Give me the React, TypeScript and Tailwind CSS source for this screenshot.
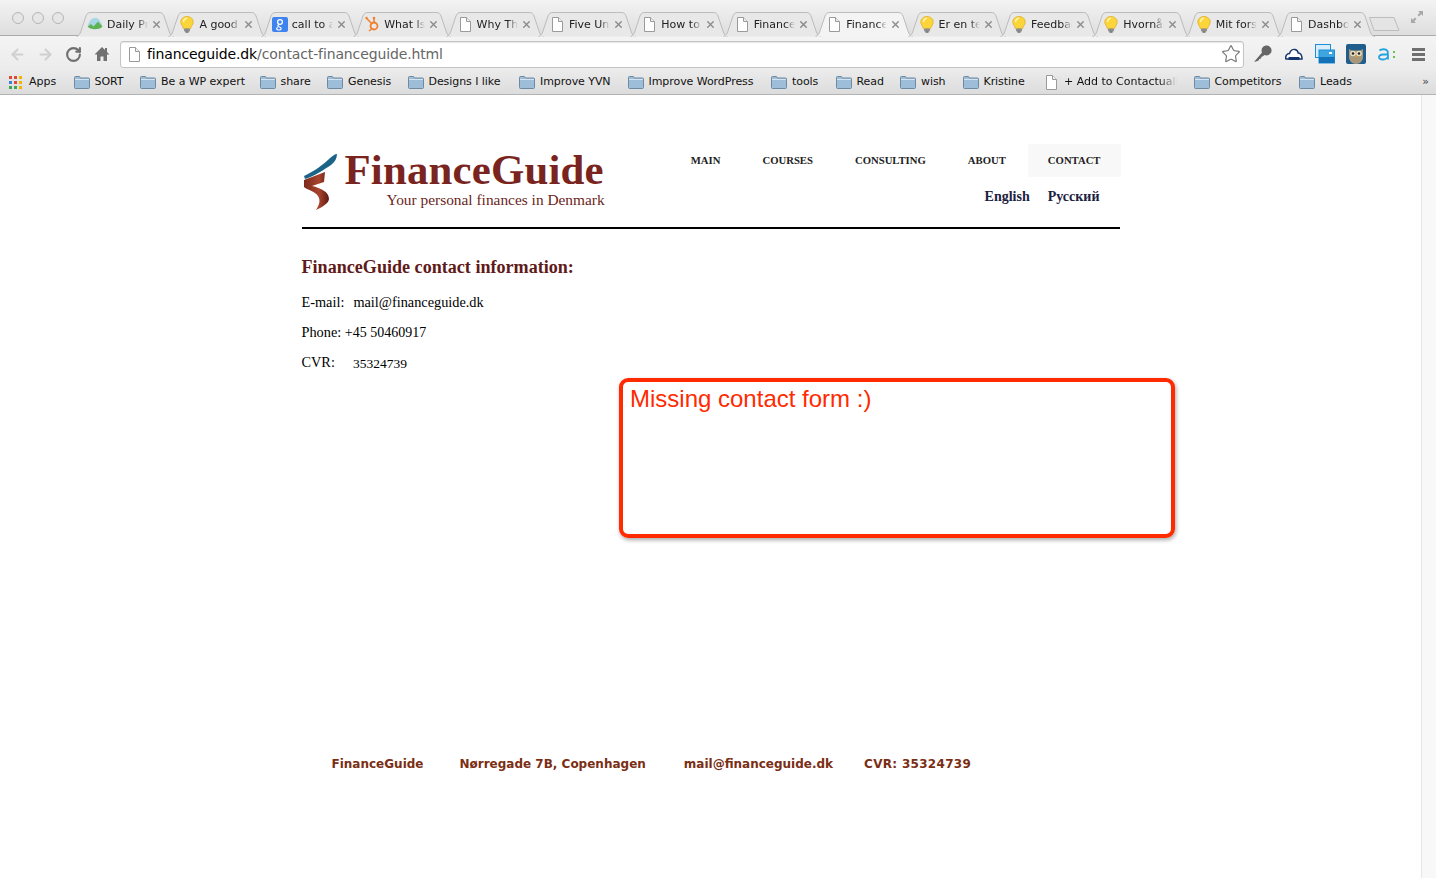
import { ArrowLeft, ArrowRight, RotateCw, Star, X } from "lucide-react";

const uiFont = "font-['DejaVu_Sans',sans-serif]";
const serif = "font-['Liberation_Serif',serif]";

const Doc = () => (
  <svg width="12" height="15" viewBox="0 0 12 15" className="shrink-0">
    <path d="M1.5.5h6l4 4v10h-10z" fill="#fff" stroke="#9a9a9a" />
    <path d="M7.5.5v4h4" fill="#f0f0f0" stroke="#9a9a9a" />
  </svg>
);

const Bulb = () => (
  <svg width="14" height="17" viewBox="0 0 14 17" className="shrink-0">
    <path d="M7 .5C3.2.5.8 3 .8 6c0 2.6 2 3.8 2.6 6.6h7.2C11.200 9.800 13.200 8.600 13.200 6 13.200 3 10.800.5 7 .5z" fill="#fbd53a" stroke="#e0a81c" strokeWidth=".7" />
    <path d="M3.600 6C3.600 4 5 2.500 7 2.300" fill="none" stroke="#fff6b8" strokeWidth="1.400" />
    <rect x="4" y="12.500" width="6" height="3" rx="1" fill="#8c8c8c" />
    <rect x="5.500" y="15.300" width="3" height="1.400" fill="#666" />
  </svg>
);

const Hill = () => (
  <svg width="16" height="14" viewBox="0 0 16 14" className="shrink-0">
    <path d="M.5 9.500C2 4 5 .8 8 .8s6 3.200 7.500 8.700C13 13 3 13 .5 9.500z" fill="#a9d6e5" />
    <path d="M.8 9.500 4 7l2.500 2.500L11 4.500l4.300 5C13 13 3 13 .8 9.500z" fill="#5fb24f" />
  </svg>
);

const GoogleG = () => (
  <svg width="16" height="15" viewBox="0 0 16 15" className="shrink-0">
    <rect width="16" height="15" rx="2" fill="#3f83ee" />
    <circle cx="8" cy="5" r="2.400" fill="none" stroke="#fff" strokeWidth="1.300" />
    <path d="M7 7.500c-2 1-1.500 2 .5 2.500s2.500 3-.5 3-3-2-1-2.500" fill="none" stroke="#fff" strokeWidth="1.200" />
  </svg>
);

const Hub = () => (
  <svg width="15" height="16" viewBox="0 0 15 16" className="shrink-0">
    <circle cx="9" cy="10" r="3.500" fill="none" stroke="#f0802c" strokeWidth="1.800" />
    <path d="M9 6.500V2.500M6.500 7.500 1.800 2.500M6.500 13l-2.500 2" stroke="#f0802c" strokeWidth="1.500" fill="none" />
    <circle cx="9" cy="2" r="1.300" fill="#f0802c" />
    <circle cx="1.500" cy="2" r="1.200" fill="#f0802c" />
  </svg>
);

const Folder = () => (
  <svg width="16" height="14" viewBox="0 0 16 14" className="shrink-0">
    <path d="M.5 2.500a1 1 0 0 1 1-1h4l1 1.500h8a1 1 0 0 1 1 1v8.500a1 1 0 0 1-1 1h-13a1 1 0 0 1-1-1z" fill="#9dbdd8" stroke="#6d8aa3" />
    <path d="M1 4.500h14" stroke="#d5e4ef" />
  </svg>
);

const tabs = [
  { title: "Daily Pr", icon: <Hill /> },
  { title: "A good", icon: <Bulb /> },
  { title: "call to a", icon: <GoogleG /> },
  { title: "What Is", icon: <Hub /> },
  { title: "Why Th", icon: <Doc /> },
  { title: "Five Uni", icon: <Doc /> },
  { title: "How to", icon: <Doc /> },
  { title: "Finance", icon: <Doc /> },
  { title: "Finance", icon: <Doc />, active: true },
  { title: "Er en te", icon: <Bulb /> },
  { title: "Feedbac", icon: <Bulb /> },
  { title: "Hvornår", icon: <Bulb /> },
  { title: "Mit fors", icon: <Bulb /> },
  { title: "Dashbo", icon: <Doc /> },
];

function Tab({ title, icon, active }: { title: string; icon: React.ReactNode; active?: boolean }) {
  return (
    <div className="relative flex h-[24px] w-[92.4px] shrink-0 items-center">
      <svg width="100" height="25" viewBox="0 0 100 25" className="absolute top-0 left-[-3px]">
        <path
          d="M.5 24.500C3 24 4 22 5 19L10 4C11 1.500 12 .5 15 .5H83C86 .5 87 1.500 88 4L93 19C94 22 95 24 98 24.500"
          fill={active ? "#f4f4f4" : "#e8e8e8"}
          stroke="#bcbcbc"
        />
      </svg>
      <div className="relative ml-[5px] flex w-[22px] justify-center">{icon}</div>
      <span className={`relative ml-[1px] w-[41px] overflow-hidden pt-[1px] whitespace-nowrap text-[11px] leading-[14px] text-[#222] ${uiFont} [mask-image:linear-gradient(to_right,black_75%,transparent)]`}>
        {title}
      </span>
      <X size={11} strokeWidth={3} className="relative ml-[3px] text-[#8a8a8a]" />
    </div>
  );
}

const bookmarks = [
  { label: "SORT", w: "w-[29px]" },
  { label: "Be a WP expert", w: "w-[82px]" },
  { label: "share", w: "w-[30px]" },
  { label: "Genesis", w: "w-[43px]" },
  { label: "Designs I like", w: "w-[74px]" },
  { label: "Improve YVN", w: "w-[71px]" },
  { label: "Improve WordPress", w: "w-[106px]" },
  { label: "tools", w: "w-[27px]" },
  { label: "Read", w: "w-[27px]" },
  { label: "wish", w: "w-[25px]" },
  { label: "Kristine", w: "w-[42px]" },
];

function Bookmark({ label, w }: { label: string; w: string }) {
  return (
    <div className="flex items-center gap-[5px]">
      <Folder />
      <span className={`${w} whitespace-nowrap text-[11px] tracking-[-0.06px] text-[#111]`}>{label}</span>
    </div>
  );
}

function Logo() {
  return (
    <svg width="36" height="60" viewBox="0 0 36 60" className="shrink-0">
      <defs>
        <linearGradient id="ribbon" x1="0" y1="0" x2="1" y2="0">
          <stop offset="0" stopColor="#7c2a1c" />
          <stop offset="0.6" stopColor="#a8442e" />
          <stop offset="1" stopColor="#5c1a12" />
        </linearGradient>
      </defs>
      <path d="M1 23C10 19 21 11 26 6c3-3 6-5 8-5 0 4-2 8-6 11C22 16 10 24 2 26z" fill="#1c6487" />
      <path d="M1 27 22 19l-1 10-12 4c9 2 17 6 17 13 0 4-8 9-13 11 3-5 5-9 2-14-3-5-11-6-14-9z" fill="url(#ribbon)" />
    </svg>
  );
}

export default function App() {
  return (
    <div className="relative flex h-[878px] w-[1436px] flex-col overflow-hidden bg-white">
      {/* browser chrome */}
      <div className="flex h-[36px] items-end border-b border-[#ababab] bg-gradient-to-b from-[#f3f3f3] to-[#dedede]">
        <div className="mb-[5px] flex w-[79px] shrink-0 items-center gap-[8px] self-end pl-[12px] pb-[6px]">
          <span className="size-[12px] shrink-0 rounded-full border border-[#b5b5b5] bg-[#e6e6e6]" />
          <span className="size-[12px] shrink-0 rounded-full border border-[#b5b5b5] bg-[#e6e6e6]" />
          <span className="size-[12px] shrink-0 rounded-full border border-[#b5b5b5] bg-[#e6e6e6]" />
        </div>
        <div className="mb-[-1px] flex h-[24px]">
          {tabs.map((t, i) => (
            <Tab key={i} title={t.title} icon={t.icon} active={t.active} />
          ))}
        </div>
        <svg width="34" height="16" viewBox="0 0 34 16" className="mb-[3px] ml-[-3px] shrink-0">
          <path d="M.5 1.500H25l5 13H5z" fill="#e4e4e4" stroke="#bdbdbd" />
        </svg>
        <svg width="14" height="14" viewBox="0 0 14 14" className="mb-[11px] ml-[7px] shrink-0">
          <path d="M8 1h5v5l-1.800-1.800L9 6.500 7.500 5l2.300-2.300zM6 13H1V8l1.800 1.800L5 7.500 6.500 9l-2.300 2.300z" fill="#a8a8a8" />
        </svg>
      </div>

      <div className="flex h-[33px] items-center bg-gradient-to-b from-[#f4f4f4] to-[#ececec] pt-[3px]">
        <ArrowLeft size={17} strokeWidth={3} className="ml-[9px] text-[#d0d0d0]" />
        <ArrowRight size={17} strokeWidth={3} className="ml-[11px] text-[#d0d0d0]" />
        <RotateCw size={17} strokeWidth={3} className="ml-[11px] text-[#6f6f6f]" />
        <svg width="16" height="16" viewBox="0 0 16 16" className="ml-[12px]">
          <path d="M8 1 .5 8.500H3V15h3.500v-4.500h3V15H13V8.500h2.500L13 6V2h-2v2z" fill="#707070" />
        </svg>
        <div className="ml-[10px] flex h-[27px] w-[1124px] items-center rounded-[3px] border border-[#c4c4c4] bg-white pr-[2px] pl-[7px] shadow-[inset_0_1px_1px_#e6e6e6]">
          <Doc />
          <span className={`ml-[7px] text-[14px] tracking-[-0.13px] text-black ${uiFont}`}>
            financeguide.dk<span className="text-[#666]">/contact-financeguide.html</span>
          </span>
          <Star size={20} strokeWidth={1.400} className="ml-auto text-[#777]" />
        </div>
        <svg width="20" height="20" viewBox="0 0 20 20" className="ml-[9px] shrink-0">
          <path d="M1 18 9 8.500a5 5 0 1 1 2.500 2.500L9.500 12.500l-1 .3-.5 1.700-1.700.5-.6 1.500-2 .8z" fill="#666" />
        </svg>
        <svg width="18" height="13" viewBox="0 0 18 13" className="ml-[12px] shrink-0">
          <path d="M1 11c-1-3 1-5.500 3.500-5.500C5.500 2.500 8 1 10 1.500c2 .5 3 2 3.200 3.500 2.300 0 4 2.500 3.800 6z" fill="#fff" stroke="#14346e" strokeWidth="1.500" />
          <path d="M3.500 9h11v3h-11z" fill="#14346e" />
        </svg>
        <svg width="20" height="20" viewBox="0 0 20 20" className="ml-[12px] shrink-0">
          <rect x=".5" y=".5" width="15" height="13" fill="#d9eefa" stroke="#1d8fd6" />
          <rect x="4" y="6" width="15.500" height="13" fill="#3da5e0" stroke="#1d8fd6" />
          <path d="M4 13h15.500v6H4z" fill="#1473b8" />
          <rect x="14" y="8" width="3" height="2" fill="#fff" />
        </svg>
        <svg width="20" height="20" viewBox="0 0 20 20" className="ml-[11px] shrink-0">
          <rect width="20" height="20" rx="2" fill="#1f5d8d" />
          <path d="M3 5l3 1.500h8L17 5v8c0 4-3 7-7 7s-7-3-7-7z" fill="#a8977a" />
          <circle cx="7" cy="9.500" r="2.800" fill="#ecdfc3" />
          <circle cx="13" cy="9.500" r="2.800" fill="#ecdfc3" />
          <circle cx="7" cy="9.500" r="1.300" fill="#222" />
          <circle cx="13" cy="9.500" r="1.300" fill="#222" />
          <path d="M10 11l-1 2h2z" fill="#e8a12a" />
        </svg>
        <svg width="14" height="13" viewBox="0 0 14 13" className="ml-[12px] shrink-0">
          <path d="M1.500 2.500C3 1 8 .5 9.500 3c.5 1 .5 2 .5 8.500M10 6.500H5C2 6.500 1 8 1 9s1 2.500 4 2.500c3 0 5-2 5-3" fill="none" stroke="#22a3e0" strokeWidth="1.800" />
        </svg>
        <span className="ml-[1px] flex flex-col gap-[3px] self-center">
          <span className="size-[2px] bg-[#6cc04a]" />
          <span className="size-[2px] bg-[#6cc04a]" />
        </span>
        <span className="ml-[17px] flex flex-col gap-[2px]">
          <span className="h-[3px] w-[13px] bg-[#6f6f6f]" />
          <span className="h-[3px] w-[13px] bg-[#6f6f6f]" />
          <span className="h-[3px] w-[13px] bg-[#6f6f6f]" />
        </span>
      </div>

      <div className={`flex h-[26px] items-center gap-[16.500px] border-b border-[#b3b3b3] bg-gradient-to-b from-[#ececec] to-[#dcdcdc] pt-[1px] pl-[9px] ${uiFont}`}>
        <div className="flex items-center gap-[7px]">
          <svg width="13" height="13" viewBox="0 0 13 13">
            <rect width="3" height="3" fill="#e0483a" />
            <rect x="5" width="3" height="3" fill="#e0483a" />
            <rect x="10" width="3" height="3" fill="#f4b400" />
            <rect y="5" width="3" height="3" fill="#3d7fe0" />
            <rect x="5" y="5" width="3" height="3" fill="#e0483a" />
            <rect x="10" y="5" width="3" height="3" fill="#f4b400" />
            <rect y="10" width="3" height="3" fill="#3aa757" />
            <rect x="5" y="10" width="3" height="3" fill="#3aa757" />
            <rect x="10" y="10" width="3" height="3" fill="#f4b400" />
          </svg>
          <span className="w-[28px] text-[11px] text-[#111]">Apps</span>
        </div>
        {bookmarks.map((b) => (
          <Bookmark key={b.label} label={b.label} w={b.w} />
        ))}
        <div className="ml-[3px] flex items-center gap-[7px]">
          <Doc />
          <span className="w-[113px] overflow-hidden whitespace-nowrap text-[11px] text-[#111] [mask-image:linear-gradient(to_right,black_85%,transparent)]">
            + Add to Contactually
          </span>
        </div>
        <Bookmark label="Competitors" w="w-[68px]" />
        <Bookmark label="Leads" w="w-[31px]" />
        <span className="ml-auto pr-[7px] text-[11px] text-[#444]">»</span>
      </div>

      {/* page */}
      <div className="flex flex-1">
        <div className={`flex-1 ${serif}`}>
          <div className="mx-auto w-[818px]">
            <header className="flex h-[134px] justify-between border-b-2 border-black pt-[49px]">
              <div className="flex items-start">
                <div className="mt-[9px] ml-[1px]">
                  <Logo />
                </div>
                <div className="ml-[6px] flex flex-col">
                  <span className="mt-[4px] text-[42.800px] leading-[44px] font-bold tracking-[0.2px] text-[#7a2420]">FinanceGuide</span>
                  <span className="mt-[-1px] mr-[-1px] self-end text-[15.400px] leading-[18px] text-[#6b1f1c]">Your personal finances in Denmark</span>
                </div>
              </div>
              <div className="mr-[-1px] flex flex-col items-end">
                <nav className="flex gap-[2px] text-[10.700px] leading-[33px] font-bold text-[#222]">
                  <span className="px-5">MAIN</span>
                  <span className="px-5">COURSES</span>
                  <span className="px-5">CONSULTING</span>
                  <span className="px-5">ABOUT</span>
                  <span className="bg-[#f8f8f8] px-5">CONTACT</span>
                </nav>
                <div className="mt-[12px] flex gap-[18px] pr-[21px] text-[14px] leading-[16px] font-bold text-[#1b2140]">
                  <span>English</span>
                  <span>Русский</span>
                </div>
              </div>
            </header>

            <h1 className="mt-[28px] text-[18.100px] leading-[20px] font-bold text-[#5f1a1a]">FinanceGuide contact information:</h1>
            <div className="mt-[16px] text-[14.300px] leading-[18px] text-black">
              <p>
                E-mail:<span className="ml-[9px]">mail@financeguide.dk</span>
              </p>
              <p className="mt-[12px]">
                Phone: <span className="text-[14px]">+45 50460917</span>
              </p>
              <p className="mt-[11px]">
                CVR:<span className="ml-[18px] align-[-1px] text-[13.500px]">35324739</span>
              </p>
            </div>

            <footer className="mt-[383px] flex pl-[30px] font-['DejaVu_Sans',sans-serif] text-[12px] leading-[16px] font-bold text-[#7a2e14]">
              <span>FinanceGuide</span>
              <span className="ml-[36px]">Nørregade 7B, Copenhagen</span>
              <span className="ml-[38px]">mail@financeguide.dk</span>
              <span className="ml-[31px] tracking-[0.3px]">CVR: 35324739</span>
            </footer>
          </div>
        </div>
        <div className="w-[15px] border-l border-[#e6e6e6] bg-[#f8f8f8]" />
      </div>

      {/* red annotation over the page */}
      <div className="absolute top-[378px] left-[619px] h-[160px] w-[556px] rounded-[9px] border-4 border-[#ff2a00] px-[7px] shadow-[1px_2px_4px_rgba(0,0,0,0.35)]">
        <span className="font-['Liberation_Sans',sans-serif] text-[24px] leading-[34px] text-[#ff2a00]">Missing contact form :)</span>
      </div>
    </div>
  );
}
